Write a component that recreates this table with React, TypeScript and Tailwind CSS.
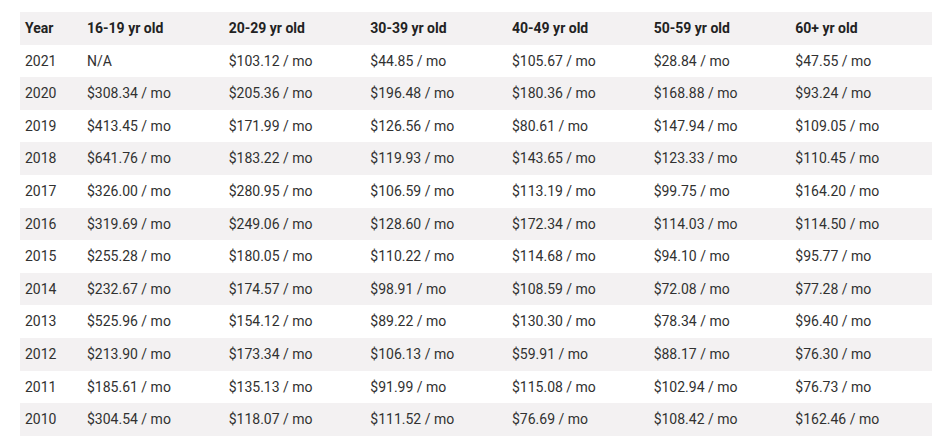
import React from "react";

const headers = ["Year", "16-19 yr old", "20-29 yr old", "30-39 yr old", "40-49 yr old", "50-59 yr old", "60+ yr old"];

const rows: string[][] = [
  ["2021", "N/A", "$103.12", "$44.85", "$105.67", "$28.84", "$47.55"],
  ["2020", "$308.34", "$205.36", "$196.48", "$180.36", "$168.88", "$93.24"],
  ["2019", "$413.45", "$171.99", "$126.56", "$80.61", "$147.94", "$109.05"],
  ["2018", "$641.76", "$183.22", "$119.93", "$143.65", "$123.33", "$110.45"],
  ["2017", "$326.00", "$280.95", "$106.59", "$113.19", "$99.75", "$164.20"],
  ["2016", "$319.69", "$249.06", "$128.60", "$172.34", "$114.03", "$114.50"],
  ["2015", "$255.28", "$180.05", "$110.22", "$114.68", "$94.10", "$95.77"],
  ["2014", "$232.67", "$174.57", "$98.91", "$108.59", "$72.08", "$77.28"],
  ["2013", "$525.96", "$154.12", "$89.22", "$130.30", "$78.34", "$96.40"],
  ["2012", "$213.90", "$173.34", "$106.13", "$59.91", "$88.17", "$76.30"],
  ["2011", "$185.61", "$135.13", "$91.99", "$115.08", "$102.94", "$76.73"],
  ["2010", "$304.54", "$118.07", "$111.52", "$76.69", "$108.42", "$162.46"],
];

export default function App() {
  return (
    <div className="w-[946px] h-[447px] bg-white pt-3 pl-5" style={{ fontFamily: "Roboto, 'Liberation Sans', sans-serif" }}>
      <table className="w-[912px] table-fixed border-collapse text-[14px] text-[#313131]">
        <colgroup>
          <col className="w-[62px]" />
          {headers.slice(1).map((h) => (
            <col key={h} />
          ))}
        </colgroup>
        <thead>
          <tr className="bg-[#f3f1f2]">
            {headers.map((h) => (
              <th key={h} className="px-[5px] py-2 leading-[16.6px] text-left font-bold text-[#222]">
                {h}
              </th>
            ))}
          </tr>
        </thead>
        <tbody>
          {rows.map((r, i) => (
            <tr key={r[0]} className={i % 2 === 1 ? "bg-[#f3f1f2]" : "bg-white"}>
              {r.map((c, j) => (
                <td key={j} className="px-[5px] py-2 leading-[16.6px] text-left">
                  {j === 0 || c === "N/A" ? c : `${c} / mo`}
                </td>
              ))}
            </tr>
          ))}
        </tbody>
      </table>
    </div>
  );
}
